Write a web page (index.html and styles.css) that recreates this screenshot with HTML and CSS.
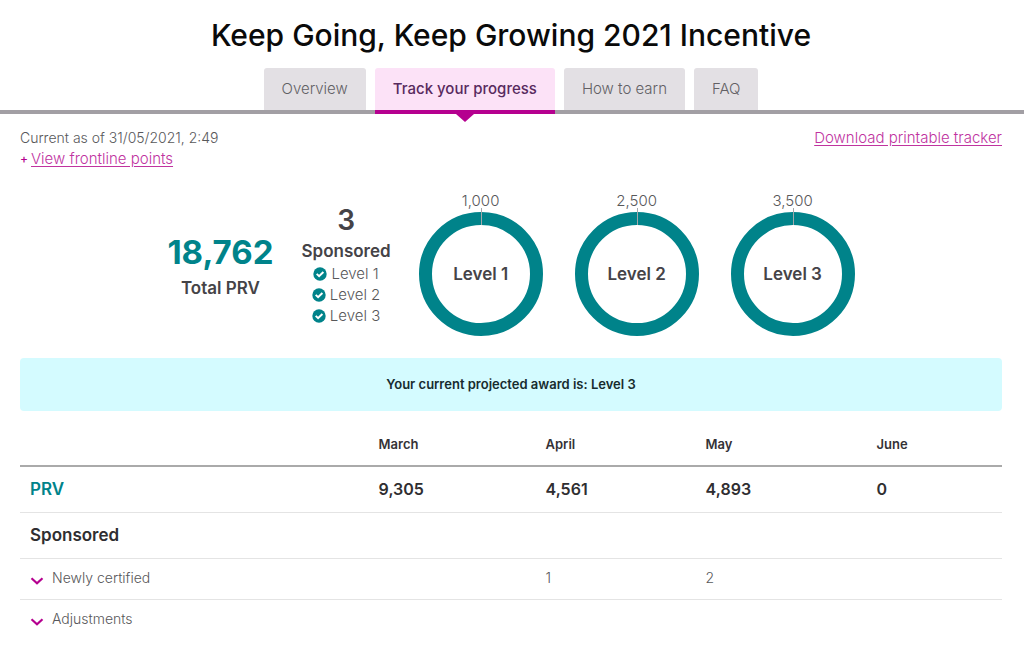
FILE: index.html
```html
<!DOCTYPE html>
<html lang="en">
<head>
<meta charset="utf-8">
<meta name="viewport" content="width=device-width, initial-scale=1">
<title>Keep Going, Keep Growing 2021 Incentive</title>
<link rel="stylesheet" href="styles.css">
</head>
<body>
<svg class="sprite" aria-hidden="true">
  <symbol id="check" viewBox="0 0 14 14"><circle cx="7" cy="7" r="6.7" fill="#00838a"/><path d="M3.700 6.900l2.400 2.300L10.400 5" fill="none" stroke="#fff" stroke-width="2"/></symbol>
  <symbol id="chevron" viewBox="0 0 14 10"><path d="M1.500 2.200L7 7.300l5.500-5.100" fill="none" stroke="#b5008f" stroke-width="2.200"/></symbol>
</svg>
<header>
  <h1 class="title">Keep Going, Keep Growing 2021 Incentive</h1>
  <nav class="tabs">
    <a class="tab" href="#overview">Overview</a>
    <a class="tab tab-active" href="#progress" aria-current="page">Track your progress</a>
    <a class="tab" href="#earn">How to earn</a>
    <a class="tab" href="#faq">FAQ</a>
  </nav>
</header>
<main class="content">
  <div class="meta">
    <div>
      <div class="date">Current as of 31/05/2021, 2:49</div>
      <div class="expand"><span class="plus">+</span><a class="link" href="#points">View frontline points</a></div>
    </div>
    <a class="link" href="#tracker">Download printable tracker</a>
  </div>
  <section class="summary">
    <div class="total">
      <div class="total-value">18,762</div>
      <div class="label">Total PRV</div>
    </div>
    <div class="sponsored">
      <div class="count">3</div>
      <div class="label">Sponsored</div>
      <ul class="levels">
        <li class="level"><svg class="check"><use href="#check"/></svg>Level 1</li>
        <li class="level"><svg class="check"><use href="#check"/></svg>Level 2</li>
        <li class="level"><svg class="check"><use href="#check"/></svg>Level 3</li>
      </ul>
    </div>
    <div class="goals">
      <div class="goal"><div class="goal-value">1,000</div><div class="ring">Level 1</div></div>
      <div class="goal"><div class="goal-value">2,500</div><div class="ring">Level 2</div></div>
      <div class="goal"><div class="goal-value">3,500</div><div class="ring">Level 3</div></div>
    </div>
  </section>
  <p class="award">Your current projected award is: Level 3</p>
  <table class="table">
    <colgroup><col class="col-name"><col class="col-march"><col class="col-april"><col class="col-may"><col></colgroup>
    <thead>
      <tr><td></td><th scope="col">March</th><th scope="col">April</th><th scope="col">May</th><th scope="col">June</th></tr>
    </thead>
    <tbody>
      <tr class="major"><th class="prv" scope="row">PRV</th><td>9,305</td><td>4,561</td><td>4,893</td><td>0</td></tr>
      <tr class="major"><th scope="row">Sponsored</th><td></td><td></td><td></td><td></td></tr>
      <tr class="minor"><th scope="row"><button class="toggle" type="button"><svg class="chevron"><use href="#chevron"/></svg>Newly certified</button></th><td></td><td>1</td><td>2</td><td></td></tr>
      <tr class="minor"><th scope="row"><button class="toggle" type="button"><svg class="chevron"><use href="#chevron"/></svg>Adjustments</button></th><td></td><td></td><td></td><td></td></tr>
    </tbody>
  </table>
</main>
</body>
</html>
```
FILE: styles.css
```css
* { box-sizing: border-box; }
body {
  margin: 0;
  background: #fff;
  color: #58585a;
  font-family: Inter, sans-serif;
  font-size: 15px;
  font-weight: 300;
  line-height: 21px;
}
.sprite { position: absolute; width: 0; height: 0; }
.title {
  margin: 0;
  padding: 15px 2px 13px 0;
  color: #0a0a0a;
  font-size: 30px;
  font-weight: 500;
  line-height: 40px;
  text-align: center;
}
.tabs {
  display: flex;
  justify-content: center;
  gap: 9px;
  padding-right: 2px;
  border-bottom: 4px solid #a29fa4;
}
.tab {
  height: 42px;
  padding: 0 18px;
  border-radius: 3px 3px 0 0;
  background: #e3e0e4;
  color: #626064;
  font-size: 15px;
  line-height: 41px;
  text-decoration: none;
}
.tab-active {
  position: relative;
  height: 46px;
  margin-bottom: -4px;
  border-bottom: 4px solid #b5008f;
  background: #fce2f7;
  color: #582a5e;
  font-weight: 500;
}
.tab-active::after {
  content: "";
  position: absolute;
  top: 46px;
  left: 50%;
  margin-left: -9px;
  border: 9px solid transparent;
  border-top: 8px solid #b5008f;
  border-bottom: 0;
}
.content { padding: 13px 22px 20px 20px; }
.meta { display: flex; justify-content: space-between; }
.date { font-size: 14px; }
.expand { display: flex; gap: 3px; }
.plus { color: #b5008f; font-size: 12px; font-weight: 500; }
.link { color: #c0339f; text-underline-offset: 2px; }
.summary {
  display: flex;
  justify-content: center;
  align-items: flex-start;
  gap: 28px;
  padding-top: 21px;
}
.total { padding-top: 42px; text-align: center; }
.total-value {
  color: #00838a;
  font-size: 33px;
  font-weight: 700;
  line-height: 40px;
}
.label {
  color: #454347;
  font-size: 17px;
  font-weight: 600;
  line-height: 22px;
}
.total .label { padding-top: 5px; }
.sponsored { padding-top: 12px; text-align: center; }
.count {
  color: #454347;
  font-size: 28px;
  font-weight: 600;
  line-height: 36px;
}
.sponsored .label { padding-top: 2px; padding-bottom: 1px; }
.levels { margin: 0; padding: 0; list-style: none; }
.level { display: flex; justify-content: center; align-items: center; gap: 4px; }
.check { width: 14px; height: 14px; }
.goals { display: flex; gap: 32px; }
.goal { text-align: center; }
.goal-value { line-height: 22px; }
.ring {
  position: relative;
  display: flex;
  align-items: center;
  justify-content: center;
  width: 124px;
  height: 124px;
  border: 13px solid #00838a;
  border-radius: 50%;
  color: #454347;
  font-size: 17px;
  font-weight: 600;
}
.ring::before {
  content: "";
  position: absolute;
  top: -17px;
  left: 49px;
  width: 1px;
  height: 17px;
  background: #a3a8aa;
}
.award {
  margin: 22px 0 13px;
  padding: 16px;
  border-radius: 4px;
  background: #d4fbff;
  color: #172b2e;
  font-size: 13px;
  font-weight: 600;
  text-align: center;
}
.table { width: 100%; border-collapse: collapse; table-layout: fixed; text-align: left; }
.col-name { width: 35.5%; }
.col-march { width: 17%; }
.col-april { width: 16.3%; }
.col-may { width: 17.4%; }
.table th, .table td { padding: 0 10px; }
.table thead tr { height: 42px; border-bottom: 2px solid #aaa; }
.table thead th { color: #343236; font-size: 13px; font-weight: 600; }
.major { height: 46px; border-bottom: 1px solid #e4e4e4; color: #2f2e31; font-size: 17px; }
.major th, .major td { font-weight: 600; }
.major td { font-size: 16px; }
.table .prv { color: #00838a; }
.minor { height: 41px; border-bottom: 1px solid #e4e4e4; font-size: 14px; }
.minor:last-child { border-bottom: 0; }
.minor th, .minor td { padding-bottom: 2px; }
.toggle {
  display: flex;
  align-items: center;
  gap: 8px;
  padding: 0;
  border: 0;
  background: none;
  color: inherit;
  font: inherit;
  font-size: 14px;
  font-weight: 300;
}
.chevron { width: 14px; height: 10px; margin-top: 6px; }
```
